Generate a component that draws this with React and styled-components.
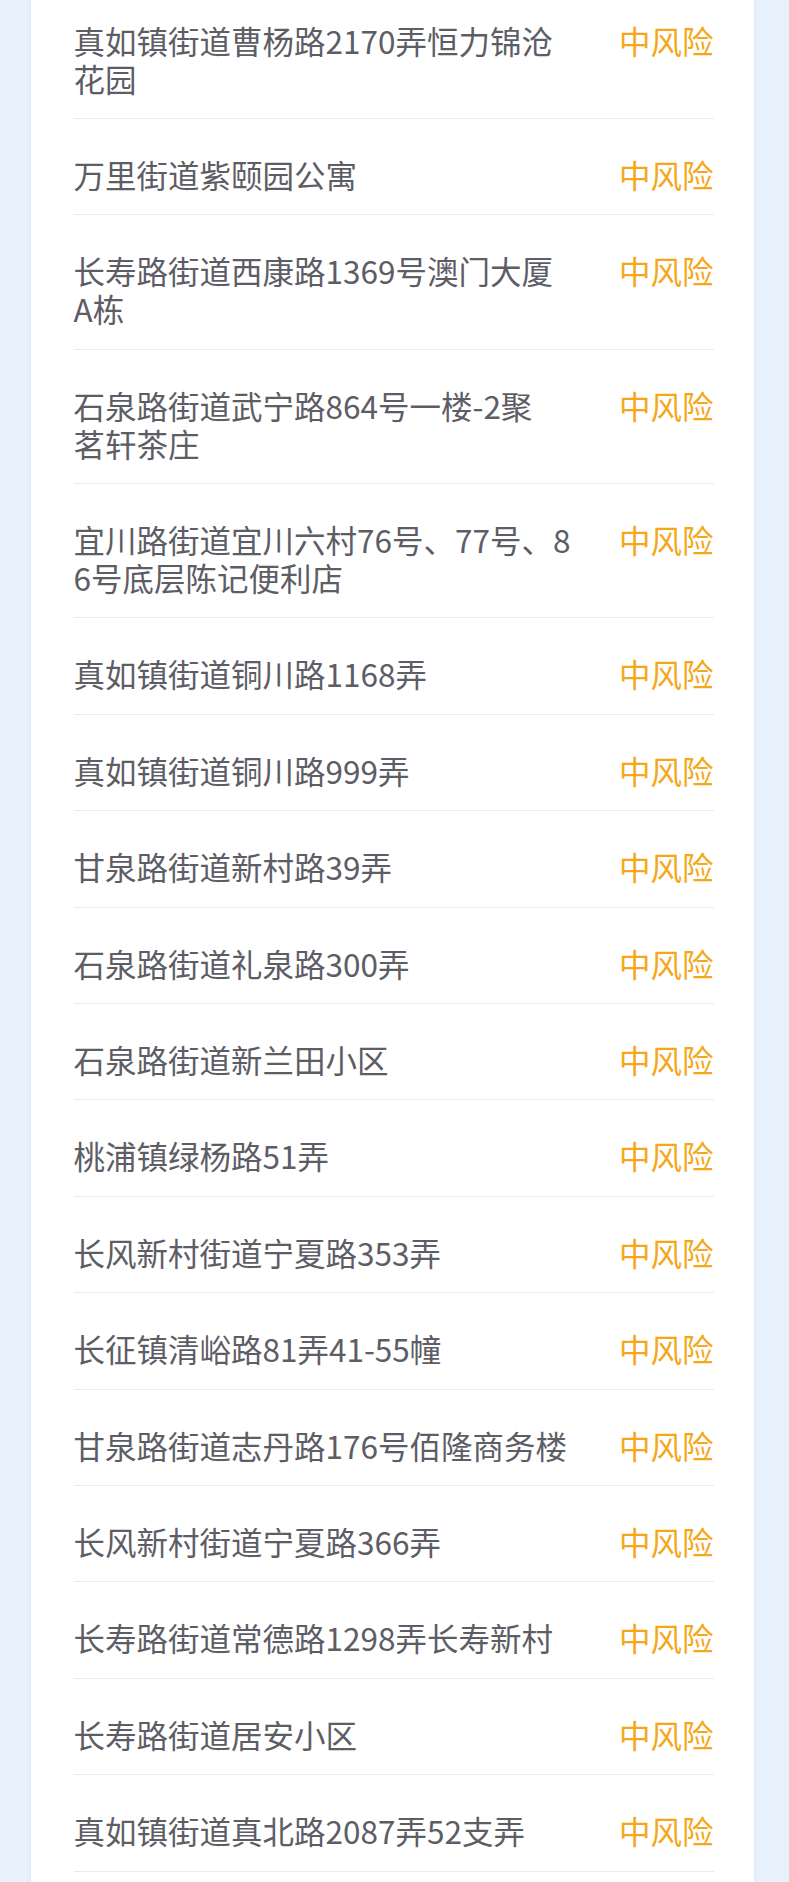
import styled, { createGlobalStyle } from 'styled-components';

const GlobalStyle = createGlobalStyle`
  html, body {
    margin: 0;
    padding: 0;
    background: #e7f2fc;
  }

  body {
    font-family: "Noto Sans CJK SC", "Noto Sans", sans-serif;
  }
`;

const Page = styled.main`
  padding: 0 35px 0 31px;
`;

const Card = styled.section`
  margin-top: -15.5px;
  padding: 0 40.4px 10px 42.5px;
  background: #fff;
  box-shadow: 0 0 4px rgba(120, 160, 200, 0.12);
`;

const List = styled.ul`
  margin: 0;
  padding: 0;
  list-style: none;
`;

const Row = styled.li`
  display: flex;
  align-items: flex-start;
  justify-content: space-between;
  padding: 36px 0 21.4px;
  border-bottom: 1px solid #e9eaec;
`;

// line breaks follow the original app's wrapping
const Place = styled.span`
  width: 500px;
  white-space: pre;
  font-size: 31.5px;
  line-height: 38px;
  color: #5d5d66;
`;

const Risk = styled.span`
  flex-shrink: 0;
  font-size: 31.5px;
  line-height: 38px;
  color: ${(p) => (p.$level === 'high' ? '#e8453c' : '#f5a718')};
`;

const places = [
  '真如镇街道曹杨路2170弄恒力锦沧\n花园',
  '万里街道紫颐园公寓',
  '长寿路街道西康路1369号澳门大厦\nA栋',
  '石泉路街道武宁路864号一楼-2聚\n茗轩茶庄',
  '宜川路街道宜川六村76号、77号、8\n6号底层陈记便利店',
  '真如镇街道铜川路1168弄',
  '真如镇街道铜川路999弄',
  '甘泉路街道新村路39弄',
  '石泉路街道礼泉路300弄',
  '石泉路街道新兰田小区',
  '桃浦镇绿杨路51弄',
  '长风新村街道宁夏路353弄',
  '长征镇清峪路81弄41-55幢',
  '甘泉路街道志丹路176号佰隆商务楼',
  '长风新村街道宁夏路366弄',
  '长寿路街道常德路1298弄长寿新村',
  '长寿路街道居安小区',
  '真如镇街道真北路2087弄52支弄',
];

export default function App() {
  return (
    <>
      <GlobalStyle />
      <Page>
        <Card>
          <List>
            {places.map((name) => (
              <Row key={name}>
                <Place>{name}</Place>
                <Risk $level="medium">中风险</Risk>
              </Row>
            ))}
          </List>
        </Card>
      </Page>
    </>
  );
}
